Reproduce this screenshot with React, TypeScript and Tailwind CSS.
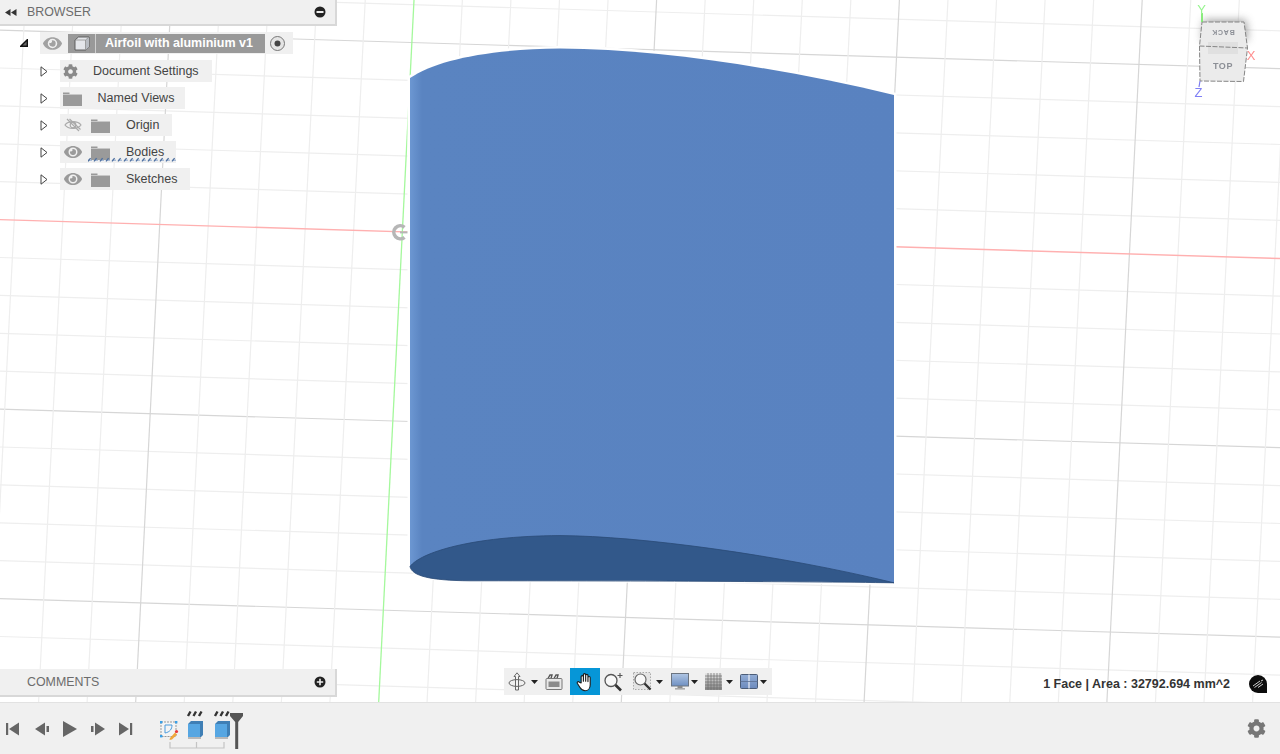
import { FaCog, FaEye } from "react-icons/fa";

const RED_Y = 219.6;
const ROW = 37.9;
const COL = 48.56;

// grid indices, -6..12 horizontally and -3..23 vertically (every 5th is a major line)
const hLines = Array.from({ length: 19 }, (_, i) => i - 6);
const vLines = Array.from({ length: 27 }, (_, i) => i - 3);
const squiggle = Array.from({ length: 15 }, (_, i) => i * 6);

function Scene() {
  const bodyPath = "M410 78 C436 60 490 49 560 48.6 C660 49 780 68 894 95 L894 583 L410 567 Z";
  const facePath = "M410 566.5 C420 553 470 536 560 535.6 C640 536 780 555 894 582.8 C800 581.5 620 580.8 470 580.8 C430 580.5 412 576 410 566.5 Z";
  return (
    <svg className="absolute inset-0" width="1280" height="702" viewBox="0 0 1280 702">
      <defs>
        <linearGradient id="bodyShade" x1="410" x2="894" y1="0" y2="0" gradientUnits="userSpaceOnUse">
          <stop offset="0" stopColor="#6c97d2" />
          <stop offset="0.025" stopColor="#5a84c1" />
          <stop offset="1" stopColor="#5982c0" />
        </linearGradient>
      </defs>
      {hLines.map((k) => {
        if (k === 0) return null;
        const y = RED_Y + ROW * k;
        return <line key={k} x1="0" y1={y} x2="1280" y2={y + 38.6} stroke={k % 5 === 0 ? "#d6d6d6" : "#eeeeee"} strokeWidth="1.2" />;
      })}
      {vLines.map((j) => {
        if (j === 5) return null;
        const x = 171 + COL * j;
        return <line key={j} x1={x} y1="0" x2={x - 35.3} y2="702" stroke={j % 5 === 0 ? "#d6d6d6" : "#eeeeee"} strokeWidth="1.2" />;
      })}
      <line x1="0" y1={RED_Y} x2="1280" y2={RED_Y + 38.9} stroke="#ffb0b0" strokeWidth="1.4" />
      <line x1="414" y1="0" x2="378.7" y2="702" stroke="#a4f89c" strokeWidth="1.3" />
      <path d="M404.5 227.3 A6.5 6.5 0 1 0 404.5 237.3" fill="none" stroke="#b6b6b6" strokeWidth="3.6" />
      <line x1="400" y1="232.4" x2="408" y2="232.4" stroke="#b6b6b6" strokeWidth="2" />
      {/* white halo round the solid */}
      <path d={bodyPath} fill="#fff" stroke="#fff" strokeWidth="5" />
      <path d={facePath} fill="#fff" stroke="#fff" strokeWidth="3" />
      <path d={bodyPath} fill="url(#bodyShade)" />
      <path d={facePath} fill="#32588a" stroke="#294a76" strokeWidth="0.8" />
    </svg>
  );
}

function ViewCube() {
  return (
    <svg className="absolute left-[1190px] top-0 blur-[0.4px]" width="72" height="100" viewBox="1190 0 72 100">
      <defs>
        <filter id="cubeGlow" x="-40%" y="-60%" width="180%" height="220%">
          <feGaussianBlur stdDeviation="4" />
        </filter>
      </defs>
      <path d="M1204 20 L1246 20 L1248 40 L1202 40 Z" fill="#808080" opacity="0.75" filter="url(#cubeGlow)" />
      <path d="M1202 22 L1244 22 L1247.5 48 L1243.5 81.5 L1200 81 L1199.5 46 Z" fill="#ebebeb" />
      <rect x="1208" y="42" width="30" height="12" fill="#e0e0e0" />
      <path
        d="M1202 22 L1244 22 L1247.5 48 L1243.5 81.5 L1200 81 L1199.5 46 Z M1199.5 46 L1247.5 48"
        fill="none"
        stroke="#858585"
        strokeWidth="1"
        strokeDasharray="5 1.5"
      />
      <text x="1223" y="69" textAnchor="middle" fontFamily="Liberation Sans, sans-serif" fontWeight="700" fontSize="9" letterSpacing="0.6" fill="#8c8f96">TOP</text>
      <text transform="rotate(180 1223 33)" x="1223" y="36" textAnchor="middle" fontFamily="Liberation Sans, sans-serif" fontWeight="700" fontSize="7" letterSpacing="0.8" fill="#8c8f96">BACK</text>
      <line x1="1202" y1="13" x2="1202" y2="22" stroke="#6fe860" strokeWidth="1.6" />
      <text x="1201.5" y="13.5" textAnchor="middle" fontFamily="Liberation Sans, sans-serif" fontSize="13" fill="#96f58e">Y</text>
      <text x="1251" y="60" textAnchor="middle" fontFamily="Liberation Sans, sans-serif" fontSize="13" fill="#ff8f8f">X</text>
      <line x1="1200" y1="81" x2="1199" y2="87" stroke="#7c7cf0" strokeWidth="1.2" />
      <text x="1198.5" y="97" textAnchor="middle" fontFamily="Liberation Sans, sans-serif" fontSize="13" fill="#7f7ff5">Z</text>
    </svg>
  );
}

function Folder({ className = "" }: { className?: string }) {
  return (
    <svg className={className} width="19" height="15" viewBox="0 0 19 15">
      <path d="M0 1.5 H6.5 V3 H19 V15 H0 Z" fill="#9a9a9a" />
      <rect x="0" y="3" width="19" height="1" fill="#c8c8c8" />
    </svg>
  );
}

function Caret({ className = "" }: { className?: string }) {
  return (
    <svg className={className} width="8" height="11" viewBox="0 0 8 11">
      <path d="M1 0.8 L7 5.5 L1 10.2 Z" fill="#fff" stroke="#444" strokeWidth="1" />
    </svg>
  );
}

function EyeOff({ className = "" }: { className?: string }) {
  return (
    <svg className={className} width="18" height="14" viewBox="0 0 18 14" fill="none" stroke="#aaaaaa" strokeWidth="1.2">
      <path d="M1 7 C4 2.5 14 2.5 17 7 C14 11.5 4 11.5 1 7 Z" />
      <circle cx="9" cy="7" r="2.8" />
      <path d="M3 1 L15 13 M5.5 1 L16.5 11.5" />
    </svg>
  );
}

function MiniCaret({ className = "" }: { className?: string }) {
  return (
    <svg className={className} width="7" height="4" viewBox="0 0 7 4">
      <path d="M0 0 H7 L3.5 4 Z" fill="#222" />
    </svg>
  );
}

function BrowserPanel() {
  return (
    <div className="absolute left-0 top-0 w-[337px]">
      <div className="flex h-[26px] items-center border-r-2 border-b-2 border-[#d8d8d8] bg-[#f0f0f0]">
        <svg className="ml-[5px]" width="12" height="7" viewBox="0 0 12 7">
          <path d="M0 3.5 L5.5 0 V7 Z M6 3.5 L11.5 0 V7 Z" fill="#333" />
        </svg>
        <span className="ml-[10px] text-[12.4px] text-[#6c6c6c]">BROWSER</span>
        <svg className="ml-auto mr-[9px]" width="12" height="12" viewBox="0 0 12 12">
          <circle cx="6" cy="6" r="5.5" fill="#222" />
          <rect x="2.5" y="5" width="7" height="2" fill="#eee" />
        </svg>
      </div>

      <div className="mt-[6px] flex h-[22px] items-center pl-[20px]">
        <svg width="8" height="8" viewBox="0 0 8 8">
          <path d="M0.7 7.3 L7.3 0.7 V7.3 Z" fill="#666" stroke="#111" strokeWidth="1.4" />
        </svg>
        <div className="ml-[12px] flex h-[22px] w-[253px] items-center bg-[#f0f0f0]">
          <FaEye className="ml-[3px] text-[19px] text-[#a2a2a2]" />
          <div className="ml-[6px] flex h-[19px] w-[197px] items-center bg-[#999999]">
            <div className="flex h-full w-[28px] items-center justify-center border-r border-[#cfcfcf]">
              <svg width="16" height="15" viewBox="0 0 16 15">
                <path d="M1 4 L4.5 1 H15 V11 L11.5 14 H1 Z" fill="#e4e6ea" stroke="#555" strokeWidth="0.9" />
                <path d="M11.5 4 L15 1 V11 L11.5 14 Z" fill="#b8bcc2" />
                <path d="M11.5 4 H1 M11.5 4 L15 1 M11.5 4 V14" fill="none" stroke="#8f8f8f" strokeWidth="0.8" />
              </svg>
            </div>
            <span className="ml-[9px] text-[12.5px] font-bold whitespace-nowrap text-white">Airfoil with aluminium v1</span>
          </div>
          <svg className="ml-[5px]" width="15" height="15" viewBox="0 0 15 15">
            <circle cx="7.5" cy="7.5" r="7" fill="#e4e4e4" stroke="#777" />
            <circle cx="7.5" cy="7.5" r="3" fill="#444" />
          </svg>
        </div>
      </div>

      <div className="mt-[6px] flex h-[22px] items-center pl-[40px]">
        <Caret />
        <div className="ml-[12px] flex h-[22px] w-[152px] items-center bg-[#f0f0f0]">
          <FaCog className="ml-[3px] text-[15px] text-[#8a8a8a]" />
          <span className="ml-[15px] text-[12.5px] whitespace-nowrap text-[#444]">Document Settings</span>
        </div>
      </div>

      <div className="mt-[5px] flex h-[22px] items-center pl-[40px]">
        <Caret />
        <div className="ml-[12px] flex h-[22px] w-[125px] items-center bg-[#f0f0f0]">
          <Folder className="ml-[3px]" />
          <span className="ml-[15.5px] text-[12.5px] whitespace-nowrap text-[#444]">Named Views</span>
        </div>
      </div>

      <div className="mt-[5px] flex h-[22px] items-center pl-[40px]">
        <Caret />
        <div className="ml-[12px] flex h-[22px] w-[112px] items-center bg-[#f0f0f0]">
          <EyeOff className="ml-[4px]" />
          <Folder className="ml-[9px]" />
          <span className="ml-[16px] text-[12.5px] whitespace-nowrap text-[#444]">Origin</span>
        </div>
      </div>

      <div className="relative mt-[5px] flex h-[22px] items-center pl-[40px]">
        <Caret />
        <div className="ml-[12px] flex h-[22px] w-[116px] items-center bg-[#f0f0f0]">
          <FaEye className="ml-[4px] text-[18px] text-[#9a9a9a]" />
          <Folder className="ml-[9px]" />
          <span className="ml-[16px] text-[12.5px] whitespace-nowrap text-[#444]">Bodies</span>
        </div>
        <svg className="absolute left-[88px] top-[16px]" width="88" height="5" viewBox="0 0 88 5">
          <path d="M0 3.2 H88" stroke="#8aa6cc" strokeWidth="1" strokeDasharray="4 2" fill="none" />
          {squiggle.map((x) => (
            <path key={x} d={`M${x} 4.4 L${x + 2.6} 1.2`} stroke="#4d6f9f" strokeWidth="1.3" fill="none" />
          ))}
        </svg>
      </div>

      <div className="mt-[5px] flex h-[22px] items-center pl-[40px]">
        <Caret />
        <div className="ml-[12px] flex h-[22px] w-[130px] items-center bg-[#f0f0f0]">
          <FaEye className="ml-[4px] text-[18px] text-[#9a9a9a]" />
          <Folder className="ml-[9px]" />
          <span className="ml-[16px] text-[12.5px] whitespace-nowrap text-[#444]">Sketches</span>
        </div>
      </div>
    </div>
  );
}

function NavToolbar() {
  return (
    <div className="absolute left-[504px] top-[668px] flex h-[27px] w-[268px] items-center bg-[#f0f0f0]">
      {/* orbit */}
      <svg className="ml-[4px]" width="18" height="19" viewBox="0 0 18 19" fill="none" stroke="#666" strokeWidth="1">
        <path d="M9 0.8 L12 4.5 H10.5 V18 H7.5 V4.5 H6 Z" fill="#f4f4f4" />
        <ellipse cx="9" cy="11" rx="8" ry="3.4" />
      </svg>
      <MiniCaret className="ml-[5px]" />
      {/* look at */}
      <svg className="ml-[7px]" width="18" height="16" viewBox="0 0 18 16">
        <path d="M3 4.5 L5 1 H7 L6 4.5 M9 4.5 L11 1 H13 L12 4.5" fill="none" stroke="#555" strokeWidth="1.4" />
        <rect x="1" y="4.5" width="16" height="11" rx="1" fill="#e8e8e8" stroke="#777" />
        <rect x="3.5" y="7.5" width="11" height="5.5" fill="#8b8b8b" />
      </svg>
      <div className="ml-[7px] flex h-[27px] w-[30px] items-center justify-center bg-[#0696d7]">
        <svg width="21" height="22" viewBox="0 0 24 24" fill="#fff" stroke="#1d1d1d" strokeWidth="1.3" strokeLinejoin="round">
          <path d="M7 13 V6 a1.3 1.3 0 0 1 2.6 0 V11 V3.8 a1.3 1.3 0 0 1 2.6 0 V11 V4.6 a1.3 1.3 0 0 1 2.6 0 V11.5 V7 a1.3 1.3 0 0 1 2.6 0 V15 C17.4 19 15 22 11.5 22 C8.5 22 7 20.5 5.5 18 L2.6 13.5 C2 12 3.8 11 5 12.2 Z" />
        </svg>
      </div>
      {/* zoom */}
      <svg className="ml-[3px]" width="20" height="20" viewBox="0 0 20 20" fill="none">
        <circle cx="8" cy="8.5" r="6" fill="#f8f8f8" stroke="#555" strokeWidth="1.3" />
        <path d="M12.5 13 L18 18.5" stroke="#333" strokeWidth="2.6" />
        <path d="M17 1 V6 M14.5 3.5 H19.5" stroke="#555" strokeWidth="1.1" />
      </svg>
      {/* zoom window */}
      <svg className="ml-[10px]" width="19" height="19" viewBox="0 0 19 19" fill="none">
        <rect x="0.5" y="0.5" width="17" height="17" fill="#e4e4e4" stroke="#aaa" strokeDasharray="1.5 1.5" />
        <circle cx="7.5" cy="7.5" r="5.5" fill="#f8f8f8" stroke="#666" strokeWidth="1.2" />
        <path d="M11.5 11.5 L17.5 17.5" stroke="#333" strokeWidth="2.4" />
      </svg>
      <MiniCaret className="ml-[4px]" />
      {/* display settings */}
      <svg className="ml-[8px]" width="18" height="17" viewBox="0 0 18 17">
        <defs>
          <linearGradient id="screenFill" x1="0" x2="0" y1="0" y2="1">
            <stop offset="0" stopColor="#b0c6e4" />
            <stop offset="1" stopColor="#6f90c2" />
          </linearGradient>
        </defs>
        <rect x="0.5" y="0.5" width="17" height="12.5" fill="url(#screenFill)" stroke="#6b7480" />
        <rect x="6.5" y="13" width="5" height="2" fill="#8a8a8a" />
        <rect x="4" y="15" width="10" height="1.6" fill="#aaa" />
      </svg>
      <MiniCaret className="ml-[2px]" />
      {/* grid */}
      <svg className="ml-[7px]" width="17" height="17" viewBox="0 0 17 17">
        <defs>
          <linearGradient id="gridFade" x1="0" x2="0" y1="0" y2="1">
            <stop offset="0" stopColor="#e8e8e8" />
            <stop offset="1" stopColor="#8a8a8a" />
          </linearGradient>
        </defs>
        <rect width="17" height="17" fill="url(#gridFade)" />
        <path d="M3 0 V17 M6 0 V17 M9 0 V17 M12 0 V17 M15 0 V17 M0 3 H17 M0 6 H17 M0 9 H17 M0 12 H17 M0 15 H17" stroke="#6e6e6e" strokeWidth="0.7" />
      </svg>
      <MiniCaret className="ml-[4px]" />
      {/* viewports */}
      <svg className="ml-[7px]" width="18" height="15" viewBox="0 0 18 15">
        <defs>
          <linearGradient id="paneFill" x1="0" x2="0" y1="0" y2="1">
            <stop offset="0" stopColor="#92add6" />
            <stop offset="1" stopColor="#6c8abd" />
          </linearGradient>
        </defs>
        <rect x="0.5" y="0.5" width="17" height="14" rx="1" fill="url(#paneFill)" stroke="#4c5d78" />
        <path d="M9 0.5 V14.5" stroke="#eef2f8" strokeWidth="1.2" />
        <path d="M0.5 7.5 H17.5" stroke="#5a6f92" strokeWidth="0.8" />
      </svg>
      <MiniCaret className="ml-[2px]" />
    </div>
  );
}

function PlaybackBar() {
  return (
    <div className="flex h-[52px] items-center border-t border-[#e2e2e2] bg-[#f0f0f0]">
      <svg className="ml-[6px]" width="13" height="14" viewBox="0 0 13 14">
        <rect x="0" y="1" width="2.2" height="12" fill="#666" />
        <path d="M13 0.5 V13.5 L3 7 Z" fill="#666" />
      </svg>
      <svg className="ml-[16px]" width="15" height="14" viewBox="0 0 15 14">
        <path d="M10 0.5 V13.5 L0 7 Z" fill="#666" />
        <rect x="11.5" y="4" width="2.5" height="6" fill="#666" />
      </svg>
      <svg className="ml-[13px]" width="14" height="16" viewBox="0 0 14 16">
        <path d="M0 0 V16 L14 8 Z" fill="#666" />
      </svg>
      <svg className="ml-[13px]" width="15" height="14" viewBox="0 0 15 14">
        <rect x="1" y="4" width="2.5" height="6" fill="#666" />
        <path d="M5 0.5 V13.5 L15 7 Z" fill="#666" />
      </svg>
      <svg className="ml-[14px]" width="14" height="14" viewBox="0 0 14 14">
        <path d="M0 0.5 V13.5 L10 7 Z" fill="#666" />
        <rect x="11" y="1" width="2.2" height="12" fill="#666" />
      </svg>
      {/* timeline features and marker */}
      <svg className="ml-[25px] mt-[6px] self-start" width="90" height="44" viewBox="158 709 90 44">
        <rect x="161" y="722" width="15" height="14.5" fill="#f4f4f4" stroke="#999" strokeDasharray="2 1" />
        <path d="M165 725 H172 C172 729 170 732 165 733 Z" fill="none" stroke="#4a9bdc" strokeWidth="1" />
        <rect x="160" y="721" width="2.4" height="2.4" fill="#38a0e8" />
        <rect x="175" y="721" width="2.4" height="2.4" fill="#38a0e8" />
        <rect x="160" y="735" width="2.4" height="2.4" fill="#38a0e8" />
        <path d="M170 738 L175 732.5 L177 734.5 L172 739.5 L169.5 740 Z" fill="#f0a73a" />
        <circle cx="176.5" cy="731.5" r="1.6" fill="#ea3a3a" />

        <path d="M188 724 L191 721 H203 V735 L200 738 Z" fill="#3f7fb5" />
        <rect x="188" y="724" width="12" height="13" fill="#56a6e2" />
        <rect x="188" y="737" width="13" height="2" fill="#b8b8b8" />
        <path d="M188 716 L190.5 711.5 M193.5 716 L196 711.5 M199 716 L201.5 711.5" stroke="#333" strokeWidth="2.4" />

        <path d="M215 724 L218 721 H230 V735 L227 738 Z" fill="#3f7fb5" />
        <rect x="215" y="724" width="12" height="13" fill="#56a6e2" />
        <rect x="215" y="737" width="13" height="2" fill="#b8b8b8" />
        <path d="M215 716 L217.5 711.5 M220.5 716 L223 711.5 M226 716 L228.5 711.5" stroke="#333" strokeWidth="2.4" />

        <path d="M170 742 V748 H224 V742 M196.5 742 V748" fill="none" stroke="#c4c4c4" strokeWidth="1.2" />

        <path d="M230 713 H243 V716 L238.2 722 V749 H235.2 V722 L230 716 Z" fill="#555" />
      </svg>
      <FaCog className="ml-auto mr-[14px] text-[19px] text-[#777]" />
    </div>
  );
}

export default function App() {
  return (
    <div className="flex h-[754px] w-[1280px] flex-col overflow-hidden bg-white font-['Liberation_Sans',Arial,sans-serif]">
      <div className="relative h-[702px]">
        <Scene />
        <ViewCube />
        <BrowserPanel />

        <div className="absolute bottom-[5px] left-0 flex h-[28px] w-[337px] items-center border-r-2 border-b-2 border-[#d8d8d8] bg-[#f0f0f0]">
          <span className="ml-[27px] pt-[1px] text-[12.4px] text-[#6c6c6c]">COMMENTS</span>
          <svg className="ml-auto mr-[9px]" width="12" height="12" viewBox="0 0 12 12">
            <circle cx="6" cy="6" r="5.5" fill="#222" />
            <path d="M2.8 6 H9.2 M6 2.8 V9.2" stroke="#eee" strokeWidth="1.6" />
          </svg>
        </div>

        <NavToolbar />

        <div className="absolute right-[13px] top-[675px] flex items-center gap-[19px]">
          <span className="text-[12.5px] font-bold whitespace-nowrap text-[#333]">1 Face | Area : 32792.694 mm^2</span>
          <svg width="18" height="18" viewBox="0 0 18 18">
            <path d="M9 0 A9 9 0 0 1 18 9 V18 H9 A9 9 0 0 1 9 0 Z" fill="#0c0c0c" />
            <path d="M4 11 L11 6 M5.5 12.5 L12.5 7.5 M9 12.5 L14 9 M12 6 L14 5" stroke="#cfcfcf" strokeWidth="1" fill="none" />
          </svg>
        </div>
      </div>
      <PlaybackBar />
    </div>
  );
}
